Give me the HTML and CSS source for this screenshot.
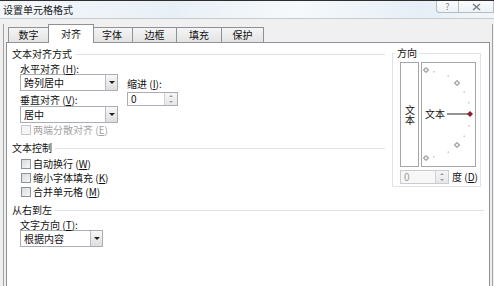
FILE: index.html
```html
<!DOCTYPE html>
<html lang="zh-CN">
<head>
    <meta charset="UTF-8">
    <title>设置单元格格式</title>
    <link rel="stylesheet" href="styles.css">
</head>
<body>
    <div class="titlebar">
        <span class="title">设置单元格格式</span>
        <div class="caption-btns">
            <span class="cap-btn help">?</span>
            <span class="cap-btn close">
                <svg width="9" height="8" viewBox="0 0 9 8"><path d="M1 1 L8 7 M8 1 L1 7" stroke="#7a838c" stroke-width="1.6"/></svg>
            </span>
        </div>
    </div>

    <div class="client">
        <div class="tabs">
            <div class="tab w40">数字</div>
            <div class="tab active">对齐</div>
            <div class="tab w42">字体</div>
            <div class="tab w44">边框</div>
            <div class="tab w45">填充</div>
            <div class="tab w41">保护</div>
        </div>

        <div class="panel">
            <div class="top-area">
                <div class="left-col">
                    <div class="group-head"><span>文本对齐方式</span></div>
                    <div class="align-area">
                        <div class="align-fields">
                            <div class="lbl">水平对齐 (<u>H</u>):</div>
                            <div class="combo w98"><span class="val">跨列居中</span><span class="drop"></span></div>
                            <div class="lbl lbl-gap">垂直对齐 (<u>V</u>):</div>
                            <div class="combo w98 combo-gap"><span class="val">居中</span><span class="drop"></span></div>
                        </div>
                        <div class="indent">
                            <div class="lbl">缩进 (<u>I</u>):</div>
                            <div class="spin w51">
                                <span class="val">0</span>
                                <span class="spin-btns"><i class="up"></i><i class="down"></i></span>
                            </div>
                        </div>
                    </div>
                    <div class="check disabled first"><span class="box"></span>两端分散对齐 (<u>E</u>)</div>

                    <div class="group-head head-2"><span>文本控制</span></div>
                    <div class="checks">
                        <div class="check"><span class="box"></span>自动换行 (<u>W</u>)</div>
                        <div class="check"><span class="box"></span>缩小字体填充 (<u>K</u>)</div>
                        <div class="check"><span class="box"></span>合并单元格 (<u>M</u>)</div>
                    </div>
                </div>

                <fieldset class="orient">
                    <legend>方向</legend>
                    <div class="orient-boxes">
                        <div class="vbox"><span class="vtext">文本</span></div>
                        <div class="dial">
                            <svg width="53" height="103" viewBox="0 0 53 103">
                                <g fill="#c8c8c8">
                                    <rect x="11" y="8" width="1.5" height="1.5"/>
                                    <rect x="25.5" y="12.5" width="1.5" height="1.5"/>
                                    <rect x="41.5" y="28.5" width="1.5" height="1.5"/>
                                    <rect x="46" y="39" width="1.5" height="1.5"/>
                                    <rect x="46" y="62" width="1.5" height="1.5"/>
                                    <rect x="41.5" y="72.5" width="1.5" height="1.5"/>
                                    <rect x="25.5" y="88.5" width="1.5" height="1.5"/>
                                    <rect x="11" y="93" width="1.5" height="1.5"/>
                                </g>
                                <g fill="#eeeeee" stroke="#6e6e6e" stroke-width="1">
                                    <path d="M4 4.5 L6.5 7 L4 9.5 L1.5 7 Z"/>
                                    <path d="M35 17.5 L37.5 20 L35 22.5 L32.5 20 Z"/>
                                    <path d="M35 79.5 L37.5 82 L35 84.5 L32.5 82 Z"/>
                                    <path d="M4 92.5 L6.5 95 L4 97.5 L1.5 95 Z"/>
                                </g>
                                <text x="3" y="55" font-size="10" fill="#111">文本</text>
                                <line x1="25" y1="51" x2="46" y2="51" stroke="#2a2a2a" stroke-width="1"/>
                                <path d="M48 48 L51 51 L48 54 L45 51 Z" fill="#8c1d36"/>
                            </svg>
                        </div>
                    </div>
                    <div class="degree-row">
                        <div class="spin w49 spin-off">
                            <span class="val">0</span>
                            <span class="spin-btns"><i class="up"></i><i class="down"></i></span>
                        </div>
                        <span class="deg">度 (<u>D</u>)</span>
                    </div>
                </fieldset>
            </div>

            <div class="bottom-area">
                <div class="group-head"><span>从右到左</span></div>
                <div class="sub">
                    <div class="lbl lbl-top">文字方向 (<u>T</u>):</div>
                    <div class="combo w83"><span class="val">根据内容</span><span class="drop"></span></div>
                </div>
            </div>
        </div>
    </div>
</body>
</html>
```

FILE: styles.css
```css
/* Page = the dialog window */
body {
    margin: 0;
    width: 494px;
    height: 286px;
    overflow: hidden;
    background-color: #f0f0f0;
    color: #111;
    font-family: "Noto Sans CJK SC", "DejaVu Sans", sans-serif;
    font-size: 10px;
}

u { text-decoration: underline; }

/* Title bar */
.titlebar {
    height: 17px;
    border-top: 1px solid #2e2e2e;
    border-bottom: 1px solid #c6cbd0;
    background: linear-gradient(90deg, #f4f7fa 0%, #e8f0f7 35%, #f6f9fb 60%, #e6eff7 85%, #f2f6f9 100%);
    display: flex;
    align-items: center;
    padding-left: 3px;
}
.title {
    font-size: 10px;
    line-height: 12px;
    color: #1a1a1a;
}
.caption-btns {
    margin-left: auto;
    align-self: flex-start;
    display: flex;
}
.cap-btn {
    height: 11px;
    border: 1px solid #b4bcc5;
    border-top: none;
    background: linear-gradient(#fbfcfd, #eef2f5);
    display: flex;
    align-items: center;
    justify-content: center;
    color: #7a838c;
    font-size: 9px;
    line-height: 11px;
    box-sizing: content-box;
}
.help { width: 21px; border-radius: 0 0 0 3px; }
.close { width: 34px; border-left: none; }

/* Client area */
.client {
    margin: 0 1px 0 3px;
    border-left: 1px solid #a3a3a3;
    border-right: 1px solid #a3a3a3;
    padding: 0 2px;
}

/* Tabs */
.tabs {
    display: flex;
    align-items: flex-end;
    height: 18px;
    margin-top: 5px;
    padding-left: 2px;
    position: relative;
    z-index: 1;
}
.tab {
    height: 14px;
    line-height: 14px;
    border: 1px solid #8e9298;
    border-bottom: none;
    margin-left: -1px;
    background: linear-gradient(#f5f5f5, #e3e3e3);
    text-align: center;
    font-size: 10px;
}
.tab:first-child { margin-left: 0; }
.tab.active {
    height: 18px;
    line-height: 17px;
    width: 44px;
    background: #fff;
    margin-bottom: -1px;
    margin-left: -1px;
    margin-right: -2px;
    position: relative;
    z-index: 2;
}
.w40 { width: 39px; }
.w41 { width: 41px; }
.w42 { width: 40px; }
.w44 { width: 43px; }
.w45 { width: 44px; }

/* Tab panel */
.panel {
    height: 250px;
    border: 1px solid #8e9298;
    background-color: #fff;
    padding: 5px 5px 0 5px;
}
.top-area {
    display: flex;
    align-items: flex-start;
}
.left-col { width: 373px; }

.group-head {
    display: flex;
    align-items: center;
    line-height: 12px;
    height: 12px;
}
.group-head::after {
    content: "";
    flex: 1;
    border-top: 1px solid #dde3e8;
    margin-left: 3px;
}
.head-2 { margin-top: 6px; }

.lbl {
    line-height: 11px;
    height: 11px;
}
.lbl-gap { margin-top: 3px; }
.lbl-top { margin-top: 3px; }

/* Alignment block */
.align-area {
    display: flex;
    margin-top: 3px;
    padding-left: 8px;
}
.indent {
    margin-left: 9px;
    padding-top: 15px;
}
.indent .spin { margin-top: 3px; }

/* Combo boxes */
.combo {
    display: flex;
    height: 17px;
    box-sizing: border-box;
    border: 1px solid #a9adb4;
    background: #fff;
}
.combo .val {
    flex: 1;
    line-height: 15px;
    padding-left: 3px;
}
.combo .drop {
    width: 11px;
    border-left: 1px solid #b8bcc2;
    background: linear-gradient(#f7f7f7, #dedede);
    display: flex;
    align-items: center;
    justify-content: center;
}
.combo .drop::before {
    content: "";
    border-left: 3px solid transparent;
    border-right: 3px solid transparent;
    border-top: 3px solid #222;
}
.combo-gap { margin-top: 1px; }
.w98 { width: 98px; }
.w83 { width: 83px; }

/* Spin boxes */
.spin {
    display: flex;
    height: 14px;
    box-sizing: border-box;
    border: 1px solid #a9adb4;
    background: #fff;
    flex-shrink: 0;
}
.spin .val {
    flex: 1;
    line-height: 12px;
    padding-left: 3px;
}
.spin-btns {
    width: 12px;
    display: flex;
    flex-direction: column;
    border-left: 1px solid #cfd2d6;
    background: linear-gradient(#f6f6f6, #e6e6e6);
}
.spin-btns i {
    flex: 1;
    display: flex;
    align-items: center;
    justify-content: center;
}
.spin-btns .up::before {
    content: "";
    border-left: 2px solid transparent;
    border-right: 2px solid transparent;
    border-bottom: 2px solid #9a9a9a;
}
.spin-btns .down::before {
    content: "";
    border-left: 2px solid transparent;
    border-right: 2px solid transparent;
    border-top: 2px solid #9a9a9a;
}
.w51 { width: 51px; }
.w49 { width: 49px; }
.spin-off {
    background: #f7f7f7;
    border-color: #c9ccd0;
}
.spin-off .val { color: #9a9a9a; }

/* Checkboxes */
.check {
    display: flex;
    align-items: center;
    line-height: 14px;
    height: 14px;
    padding-left: 9px;
}
.check .box {
    width: 10px;
    height: 10px;
    box-sizing: border-box;
    border: 1px solid #8f9296;
    background: linear-gradient(135deg, #d9dbde, #f6f6f6);
    margin-right: 2px;
}
.check.first {
    height: 12px;
    line-height: 12px;
    margin-top: 1px;
}
.check.disabled { color: #a4a4a4; }
.check.disabled .box {
    border-color: #c6c8cb;
    background: #f4f4f4;
}
.checks { margin-top: 3px; }

/* Orientation group */
.orient {
    margin: -1px 0 0 7px;
    width: 89px;
    box-sizing: border-box;
    border: 1px solid #dde3e8;
    padding: 0 3px 2px 7px;
    min-width: 0;
}
.orient legend {
    padding: 0 2px;
    margin-left: -5px;
    line-height: 12px;
    font-size: 10px;
}
.orient-boxes {
    display: flex;
    gap: 2px;
    margin-top: 3px;
}
.vbox {
    width: 19px;
    height: 105px;
    box-sizing: border-box;
    border: 1px solid #a3a6aa;
    display: flex;
    align-items: center;
    justify-content: center;
}
.vtext {
    writing-mode: vertical-rl;
    text-orientation: upright;
    line-height: 10px;
    letter-spacing: 0;
}
.dial {
    width: 55px;
    height: 105px;
    box-sizing: border-box;
    border: 1px solid #a3a6aa;
}
.dial svg { display: block; }
.degree-row {
    display: flex;
    align-items: center;
    margin-top: 3px;
    white-space: nowrap;
}
.deg {
    margin-left: 3px;
    line-height: 12px;
    white-space: nowrap;
    flex-shrink: 0;
}

/* Right-to-left section */
.bottom-area { margin-top: 5px; }
.sub { padding-left: 8px; }
```
